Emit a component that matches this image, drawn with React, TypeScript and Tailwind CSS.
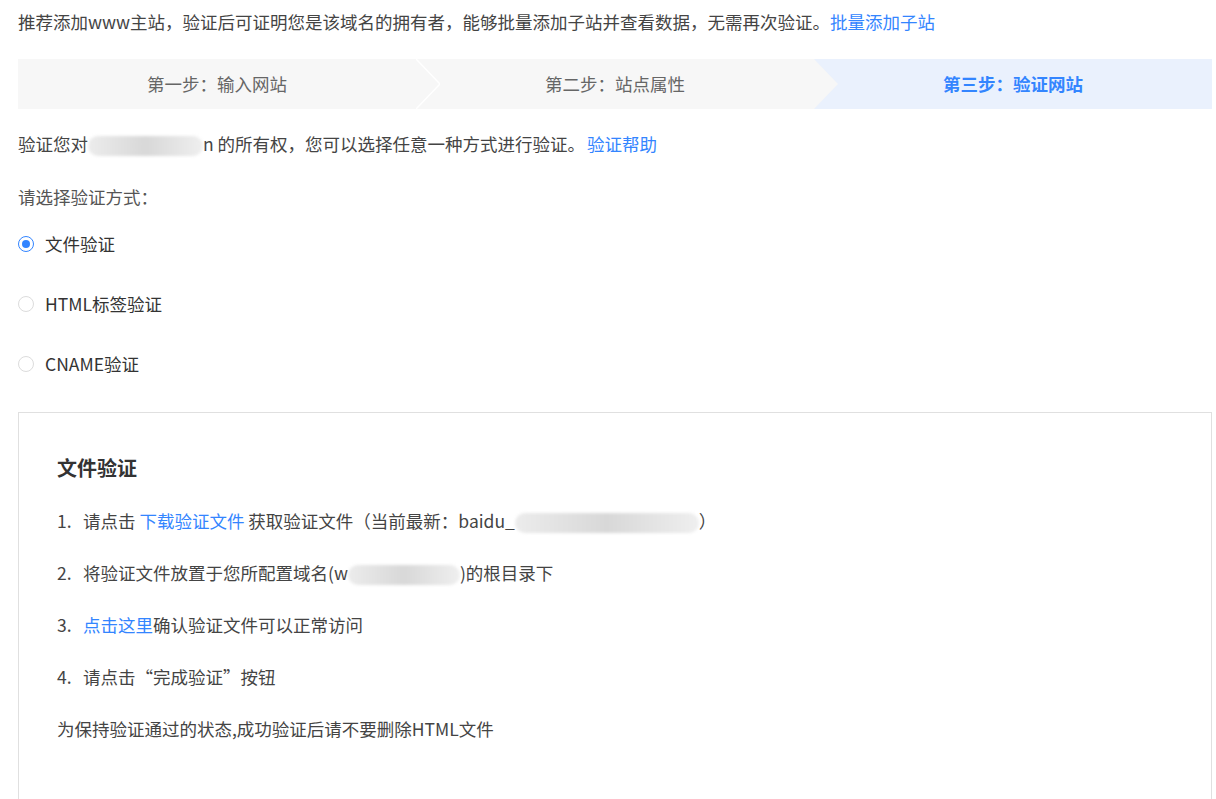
import React from 'react';

const font = { fontFamily: '"Microsoft YaHei", "Noto Sans CJK SC", "Noto Sans", sans-serif' };

const Blur: React.FC<{ w: string }> = ({ w }) => (
  <span className={`inline-block align-middle h-[20px] ${w} rounded-full bg-gradient-to-r from-[#ececec] via-[#d8d8d8] to-[#efefef] blur-[1.5px]`} />
);

const steps = [
  { label: '第一步：输入网站', active: false },
  { label: '第二步：站点属性', active: false },
  { label: '第三步：验证网站', active: true },
];

const Radio: React.FC<{ checked?: boolean; label: string; className?: string }> = ({ checked, label, className }) => (
  <label className={`flex items-center h-6 gap-[11px] cursor-pointer ${className ?? ''}`}>
    <span
      className={`w-4 h-4 rounded-full border flex items-center justify-center bg-white ${
        checked ? 'border-[#3385ff]' : 'border-[#dcdcdc]'
      }`}
    >
      {checked && <span className="w-2 h-2 rounded-full bg-[#3385ff]" />}
    </span>
    <span className="leading-6 text-[#333]">{label}</span>
  </label>
);

export default function App() {
  return (
    <div className="min-h-screen bg-white px-[18px] pt-[10px] text-[17.5px] leading-6 text-[#444]" style={font}>
      {/* intro line */}
      <p className="h-6 w-[1194px] whitespace-nowrap">
        推荐添加www主站，验证后可证明您是该域名的拥有者，能够批量添加子站并查看数据，无需再次验证。
        <a className="text-[#3385ff] cursor-pointer">批量添加子站</a>
      </p>

      {/* steps */}
      <div className="mt-[25px] flex h-[50px] w-[1194px]">
        {steps.map((s, i) => (
          <div
            key={s.label}
            className={`relative flex-1 flex items-center justify-center ${
              s.active ? 'bg-[#eaf1fd] text-[#3385ff] font-bold' : 'bg-[#f7f7f7] text-[#666]'
            }`}
          >
            <span>{s.label}</span>
            {i < 2 && (
              <svg className="absolute right-[-24px] top-0 z-10" width="24" height="50" viewBox="0 0 24 50">
                <polygon points="0,0 24,25 0,50" fill="#f7f7f7" />
                {i === 0 && <polyline points="0,0 24,25 0,50" fill="none" stroke="#ffffff" strokeWidth="1.5" />}
              </svg>
            )}
          </div>
        ))}
      </div>

      {/* ownership line */}
      <p className="mt-[23px] h-6 whitespace-nowrap">
        验证您对
        <Blur w="w-[115px]" />
        n 的所有权，您可以选择任意一种方式进行验证。
        <a className="ml-[2px] text-[#3385ff] cursor-pointer">验证帮助</a>
      </p>

      <p className="mt-[29px] h-6 text-[#555]">请选择验证方式：</p>

      <Radio checked label="文件验证" className="mt-[23px]" />
      <Radio label="HTML标签验证" className="mt-[36px]" />
      <Radio label="CNAME验证" className="mt-[36px]" />

      {/* file verification panel */}
      <div className="mt-[36px] w-[1194px] h-[420px] border border-[#e0e0e0] pl-[38px] pt-[42px]">
        <h3 className="text-[20px] leading-[26px] font-bold text-[#333]">文件验证</h3>
        <ol>
          <li className="mt-[28px] flex h-6 whitespace-nowrap">
            <span className="w-[26px]">1.</span>
            <span>
              请点击 <a className="text-[#3385ff] cursor-pointer">下载验证文件</a> 获取验证文件（当前最新：baidu_
              <Blur w="w-[184px]" />）
            </span>
          </li>
          <li className="mt-[28px] flex h-6 whitespace-nowrap">
            <span className="w-[26px]">2.</span>
            <span>
              将验证文件放置于您所配置域名(w
              <Blur w="w-[112px]" />
              )的根目录下
            </span>
          </li>
          <li className="mt-[28px] flex h-6 whitespace-nowrap">
            <span className="w-[26px]">3.</span>
            <span>
              <a className="text-[#3385ff] cursor-pointer">点击这里</a>确认验证文件可以正常访问
            </span>
          </li>
          <li className="mt-[28px] flex h-6 whitespace-nowrap">
            <span className="w-[26px]">4.</span>
            <span>请点击“完成验证”按钮</span>
          </li>
        </ol>
        <p className="mt-[28px] h-6">为保持验证通过的状态,成功验证后请不要删除HTML文件</p>
      </div>
    </div>
  );
}
